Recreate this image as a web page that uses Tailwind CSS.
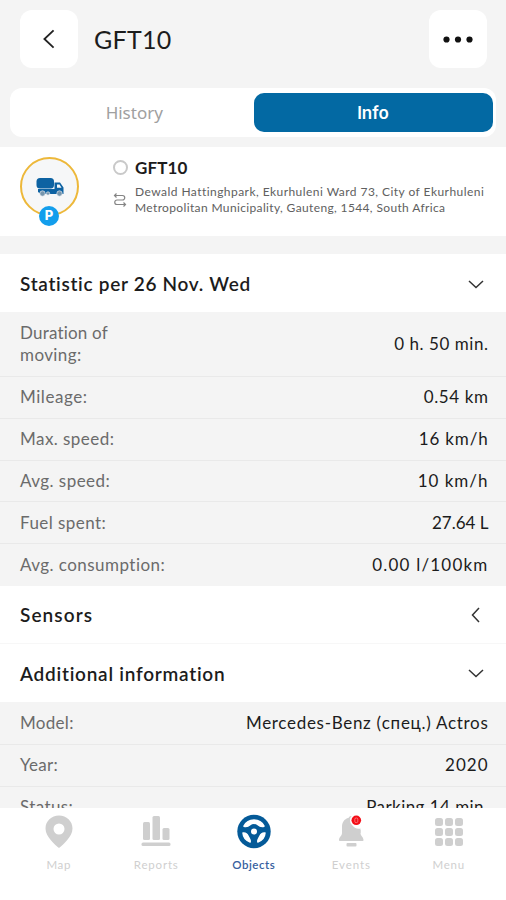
<!DOCTYPE html>
<html lang="en">
<head>
<meta charset="utf-8">
<meta name="viewport" content="width=device-width, initial-scale=1">
<title>GFT10</title>
<script src="https://cdn.jsdelivr.net/npm/@tailwindcss/browser@4"></script>
</head>
<body class="bg-[#f4f4f4]">
<div class="relative flex h-[900px] w-[506px] flex-col overflow-hidden bg-[#f4f4f4] font-['Lato','Noto_Sans',sans-serif] text-[#1c1c1c]">
  <header class="flex h-[88px] shrink-0 items-start px-5 pt-2.5">
    <button class="flex size-[58px] items-center justify-center rounded-xl bg-white" aria-label="Back">
      <svg class="h-[22px] w-4" viewBox="0 0 16 24" fill="none" stroke="#222" stroke-width="2"><path d="M13 2.500 3 12l10 9.500"/></svg>
    </button>
    <h1 class="ml-4 mt-[11px] text-[25px] leading-9"><span class="tracking-[0.3px]">GFT10</span></h1>
    <button class="-mr-px ml-auto flex size-[58px] items-center justify-center rounded-xl bg-white" aria-label="More">
      <svg class="h-2 w-[30px]" viewBox="0 0 30 8" fill="#111"><circle cx="3.500" cy="4.500" r="3.100"/><circle cx="15" cy="4.500" r="3.100"/><circle cx="26.500" cy="4.500" r="3.100"/></svg>
    </button>
  </header>
  <nav class="mx-[10px] flex h-[49px] shrink-0 rounded-xl bg-white p-[5px] pr-[3.500px]">
    <button class="flex-1 text-[17px] font-['Noto_Sans',sans-serif] text-[#a0a0a0]"><span>History</span></button>
    <button class="h-[39px] w-[239px] rounded-[10px] bg-[#0369a3] pt-0.5 font-['Inter',sans-serif] text-[17px] font-semibold text-white"><span>Info</span></button>
  </nav>
  <section class="mt-[10px] flex h-[89px] shrink-0 bg-white pl-5">
    <div class="relative mt-[10px] flex size-[59px] items-center justify-center rounded-full border-2 border-[#edb83a] bg-[#f6f7f8]">
      <svg class="h-5 w-7" viewBox="0 0 28 20"><rect x=".5" y="1" width="17.500" height="10.500" rx="3.500" fill="#0d62a2"/><path d="M2 12h16.500V5.500H24l3.500 5V17H5l-3-2z" fill="#0d62a2"/><path d="M21 7.500h2.500l2 3.200H21z" fill="#f6f7f8"/><g fill="#7595ad" stroke="#f6f7f8" stroke-width=".6"><circle cx="6.500" cy="16.500" r="2.700"/><circle cx="12" cy="16.500" r="1.700"/><circle cx="23.500" cy="16.500" r="2.700"/></g></svg>
      <span class="absolute -bottom-[12px] left-[17px] flex size-5 items-center justify-center rounded-full bg-[#139eec] font-['Inter',sans-serif] text-[13px] font-extrabold text-white">P</span>
    </div>
    <div class="ml-[34px] flex w-[22px] flex-col pt-[13px]">
      <span class="size-[15px] rounded-full border-[2.500px] border-[#c9c9c9]"></span>
      <svg class="mt-[18px] h-[14px] w-[14px]" viewBox="0 0 14 14" fill="none" stroke="#858585" stroke-width="1.200"><path d="M1.500 2.500H9.500a2.250 2.250 0 0 1 0 4.500H4a2.250 2.250 0 0 0 0 4.500h8M3.500.500l-2 2 2 2M10.500 9.500l2 2-2 2"/></svg>
    </div>
    <div class="pt-[10px]">
      <h2 class="text-[17px] leading-[22px] font-bold"><span class="tracking-[0.1px]">GFT10</span></h2>
      <p class="mt-[5px] text-[12px] leading-[15.500px] whitespace-nowrap text-[#606060]"><span class="tracking-[0.450px]">Dewald Hattinghpark, Ekurhuleni Ward 73, City of Ekurhuleni</span><br><span class="tracking-[0.360px]">Metropolitan Municipality, Gauteng, 1544, South Africa</span></p>
    </div>
  </section>
  <main class="mt-[18px] flex flex-col text-[17px]">
    <h3 class="flex h-[58px] shrink-0 items-center justify-between bg-white pt-0.5 pr-[22px] pl-5 text-[19px] font-semibold"><span class="tracking-[0.700px]">Statistic per 26 Nov. Wed</span><svg class="h-[9px] w-4" viewBox="0 0 16 9" fill="none" stroke="#333" stroke-width="1.500"><path d="m1 1 7 6.500L15 1"/></svg></h3>
    <dl class="[&>div]:flex [&>div]:h-[41.800px] [&>div]:items-center [&>div]:justify-between [&>div]:border-b [&>div]:border-[#e9e9e9] [&>div]:pr-[17.500px] [&>div]:pb-px [&>div]:pl-5 [&_dt]:text-[#6b6b6b]">
      <div class="h-[65px]! pb-0!"><dt class="w-32 leading-[22px]"><span class="tracking-[0.200px]">Duration of</span><br><span class="tracking-[0.400px]">moving:</span></dt><dd><span class="tracking-[0.550px]">0 h. 50 min.</span></dd></div>
      <div><dt><span class="tracking-[0.550px]">Mileage:</span></dt><dd><span class="tracking-[0.600px]">0.54 km</span></dd></div>
      <div><dt><span class="tracking-[0.450px]">Max. speed:</span></dt><dd><span class="tracking-[0.850px]">16 km/h</span></dd></div>
      <div><dt><span class="tracking-[0.450px]">Avg. speed:</span></dt><dd><span class="tracking-[1px]">10 km/h</span></dd></div>
      <div><dt><span class="tracking-[0.450px]">Fuel spent:</span></dt><dd><span>27.64 L</span></dd></div>
      <div class="border-b-0!"><dt><span class="tracking-[0.450px]">Avg. consumption:</span></dt><dd><span class="tracking-[1.200px]">0.00 l/100km</span></dd></div>
    </dl>
    <h3 class="flex h-[58px] shrink-0 items-center justify-between border-b border-[#f7f7f7] bg-white pt-0.5 pr-[26px] pl-5 text-[19px] font-semibold"><span class="tracking-[1.100px]">Sensors</span><svg class="h-4 w-[9px]" viewBox="0 0 9 16" fill="none" stroke="#333" stroke-width="1.500"><path d="M8 1 1.500 8 8 15"/></svg></h3>
    <h3 class="flex h-[58px] shrink-0 items-center justify-between bg-white pt-0.5 pr-[22px] pl-5 text-[19px] font-semibold"><span class="tracking-[0.750px]">Additional information</span><svg class="h-[9px] w-4" viewBox="0 0 16 9" fill="none" stroke="#333" stroke-width="1.500"><path d="m1 1 7 6.500L15 1"/></svg></h3>
    <dl class="[&>div]:flex [&>div]:h-[42px] [&>div]:items-center [&>div]:justify-between [&>div]:border-b [&>div]:border-[#e9e9e9] [&>div]:pr-[17.500px] [&>div]:pl-5 [&_dt]:text-[#6b6b6b]">
      <div class="h-[43px]!"><dt><span class="tracking-[0.300px]">Model:</span></dt><dd><span class="tracking-[0.700px]">Mercedes-Benz (спец.) Actros</span></dd></div>
      <div class="pb-px"><dt><span class="tracking-[0.300px]">Year:</span></dt><dd><span class="tracking-[1px]">2020</span></dd></div>
      <div class="pb-px"><dt><span class="tracking-[0.400px]">Status:</span></dt><dd><span class="tracking-[0.450px]">Parking 14 min.</span></dd></div>
    </dl>
  </main>
  <footer class="absolute inset-x-0 bottom-0 grid h-[92px] grid-cols-[repeat(5,97.500px)] justify-center bg-white pt-1.5 pl-[1.500px] text-[11.500px] text-[#cfcfcf] [&>a]:flex [&>a]:flex-col [&>a]:items-center [&_span]:mt-[6px] [&_svg]:h-9 [&_svg]:w-9">
    <a><svg viewBox="0 0 36 36" fill="#cfcfcf"><path fill-rule="evenodd" d="M18 1.500c-7.600 0-13.500 5.600-13.500 13C4.500 23 14.500 31 18 34c3.500-3 13.500-11 13.500-19.500 0-7.400-5.900-13-13.500-13zm0 8a5.500 5.500 0 1 1 0 11 5.500 5.500 0 0 1 0-11z"/></svg><span class="tracking-[0.600px]">Map</span></a>
    <a><svg viewBox="0 0 36 36" fill="#cfcfcf"><rect x="5" y="8" width="7" height="18" rx="1.500"/><rect x="14.500" y="2" width="7.500" height="24" rx="1.500"/><rect x="24.500" y="14" width="7" height="12" rx="1.500"/><rect x="3.500" y="28.500" width="29" height="3.500" rx="1.500"/></svg><span class="tracking-[0.800px]">Reports</span></a>
    <a class="font-semibold text-[#375fa0]"><svg viewBox="0 0 36 36"><circle cx="18" cy="17.500" r="16.700" fill="#045a98"/><g fill="#fff" stroke="#fff" stroke-width="1.500" stroke-linejoin="round"><path d="M8 12.200C12 4 24 4 28 12.200c-3 .6-4 .3-5.700-1.200-3-2.300-5.600-2.300-8.600 0C12 12.500 11 12.800 8 12.200z"/><path d="M7 19c2.500-.3 4 .6 5 3 .8 2.200 2.500 3 2.200 6C10 26.500 7.300 23.500 7 19z"/><path d="M29 19c-2.500-.3-4 .6-5 3-.8 2.200-2.500 3-2.200 6 4.200-1.500 6.900-4.500 7.200-9z"/></g><circle cx="18" cy="17.500" r="3" fill="#fff"/></svg><span class="tracking-[0.500px]">Objects</span></a>
    <a><svg viewBox="0 0 36 36"><path d="M18 2c-1.500 0-2 1-2.500 2C11 5 9 8.500 9 13v6c0 3-3 4-3 7 0 .8.500 1 1 1h22.500c.8 0 1-.5 1-1 0-3-3-4-3-7v-3C22 16 17 12 17.500 7c.1-2 .8-3.800 2-5z" fill="#cfcfcf"/><path d="M19 3c-3 6 2 13 8.500 11.500V19H13V5z" fill="#cfcfcf"/><rect x="13.500" y="29" width="10" height="3.500" rx="1" fill="#cfcfcf"/><circle cx="23.300" cy="6.300" r="6.300" fill="#fff"/><circle cx="23.300" cy="6.300" r="4.800" fill="#f40e17"/><rect x="21.800" y="4" width="3" height="4.600" rx="1.200" fill="none" stroke="#f9969a" stroke-width=".7"/></svg><span class="tracking-[0.900px]">Events</span></a>
    <a><svg viewBox="0 0 36 36" fill="#cfcfcf"><g id="r"><rect x="4" y="4" width="8" height="8" rx="2.500"/><rect x="14" y="4" width="8" height="8" rx="2.500"/><rect x="24" y="4" width="8" height="8" rx="2.500"/></g><use href="#r" y="10"/><use href="#r" y="20"/></svg><span class="tracking-[0.800px]">Menu</span></a>
  </footer>
</div>
</body>
</html>
